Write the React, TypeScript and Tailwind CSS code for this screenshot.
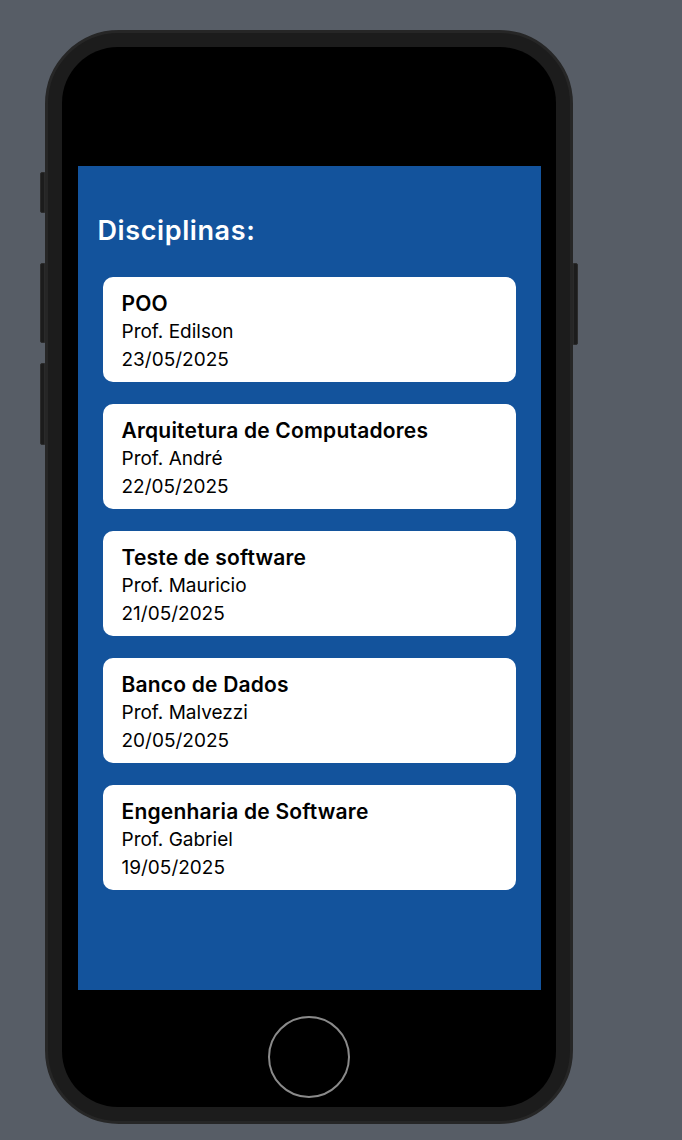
const disciplinas = [
  { nome: "POO", professor: "Prof. Edilson", data: "23/05/2025" },
  { nome: "Arquitetura de Computadores", professor: "Prof. André", data: "22/05/2025" },
  { nome: "Teste de software", professor: "Prof. Mauricio", data: "21/05/2025" },
  { nome: "Banco de Dados", professor: "Prof. Malvezzi", data: "20/05/2025" },
  { nome: "Engenharia de Software", professor: "Prof. Gabriel", data: "19/05/2025" },
]

function DisciplinaCard({ nome, professor, data }: { nome: string; professor: string; data: string }) {
  return (
    <div className="h-[105px] rounded-[10px] bg-white px-[19px] pt-[13px] text-black">
      <div className="text-[21px] leading-[28px] font-semibold tracking-[0.2px]">{nome}</div>
      <div className="text-[19px] leading-[28px]">{professor}</div>
      <div className="text-[19px] leading-[28px]">{data}</div>
    </div>
  )
}

function SideButton({ h, side }: { h: string; side: "left" | "right" }) {
  return (
    <div
      className={`${h} w-[5px] border border-[#2a2a2a] bg-[#1c1c1c] ${
        side === "left" ? "rounded-l-[2px]" : "rounded-r-[2px]"
      }`}
    />
  )
}

export default function App() {
  return (
    <div
      className="flex min-h-[1140px] w-full items-start bg-[#575d66] pl-[40px] pt-[30px]"
      style={{ fontFamily: "Inter, 'Noto Sans', sans-serif" }}
    >
      {/* left side buttons */}
      <div className="flex flex-col pt-[142px]">
        <SideButton h="h-[41px]" side="left" />
        <div className="mt-[50px]">
          <SideButton h="h-[80px]" side="left" />
        </div>
        <div className="mt-[20px]">
          <SideButton h="h-[82px]" side="left" />
        </div>
      </div>

      {/* Phone */}
      <div className="h-[1094px] w-[528px] rounded-[74px] border-[3px] border-[#262626] bg-[#1c1c1c] p-[14px]">
        {/* front glass */}
        <div className="flex h-full w-full flex-col items-center rounded-[56px] bg-black pt-[119px]">
          <div className="h-[824px] w-[463px] bg-[#13539c] px-[20px] pt-[49px]">
            <h1 className="text-[27px] leading-[32px] font-semibold tracking-[0.6px] text-white">Disciplinas:</h1>
            <div className="mt-[30px] flex flex-col gap-[22px] px-[5px]">
              {disciplinas.map((d) => (
                <DisciplinaCard key={d.nome} {...d} />
              ))}
            </div>
          </div>
          {/* home button */}
          <div className="mt-[26px] h-[82px] w-[82px] rounded-full border-2 border-[#8a8a8a]" />
        </div>
      </div>

      {/* right side button */}
      <div className="pt-[233px]">
        <SideButton h="h-[82px]" side="right" />
      </div>
    </div>
  )
}
